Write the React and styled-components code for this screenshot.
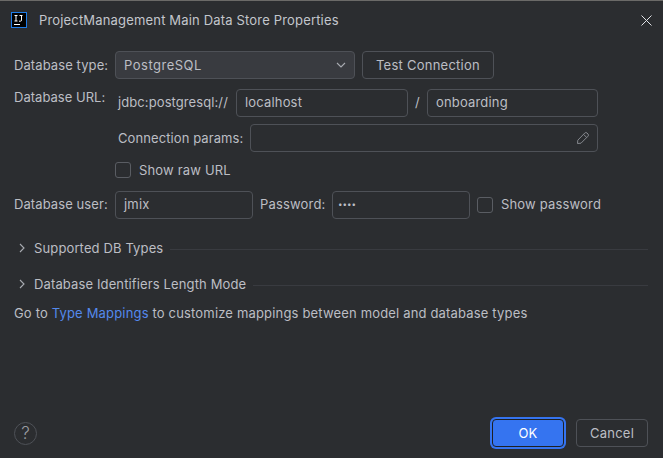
import React from "react";
import styled, { createGlobalStyle, css } from "styled-components";

const Global = createGlobalStyle`
  html, body { margin: 0; padding: 0; background: #2b2d30; }
  * { box-sizing: border-box; }
`;

const Dialog = styled.div`
  width: 663px;
  height: 458px;
  background: #2b2d30;
  border-top: 1px solid #6b6a68;
  color: #bcbec4;
  font-family: Inter, "Noto Sans", sans-serif;
  font-size: 13px;
  letter-spacing: 0.17px;
  display: flex;
  flex-direction: column;
  overflow: hidden;
`;

const TitleBar = styled.div`
  height: 38px;
  display: flex;
  align-items: center;
  padding: 0 11px 0 11px;
  gap: 12px;
`;

const Title = styled.div`
  flex: 1;
  color: #c3c6cc;
`;

const Form = styled.div`
  padding: 12px 65px 0 14px;
  display: flex;
  flex-direction: column;
`;

const Row = styled.div`
  display: flex;
  align-items: center;
  margin-top: ${(p) => p.$top ?? 0}px;
  margin-left: ${(p) => p.$left ?? 0}px;
  ${(p) =>
    p.$lift &&
    css`
      & > span,
      & > div {
        padding-bottom: 2px;
      }
    `}
`;

const UrlGrid = styled.div`
  display: flex;
  align-items: flex-start;
  margin-top: 10px;
`;

const UrlLabel = styled.div`
  width: 104px;
  line-height: 16px;
  letter-spacing: 0.02px;
`;

const UrlBody = styled.div`
  flex: 1;
  min-width: 0;
  display: flex;
  flex-direction: column;
`;

const Label = styled.span`
  white-space: nowrap;
  line-height: 16px;
  flex: none;
  width: ${(p) => (p.$w ? `${p.$w}px` : "auto")};
  letter-spacing: ${(p) => (p.$tight ? "0.09px" : "inherit")};
`;

const Combo = styled.div`
  width: 240px;
  height: 28px;
  background: #393b40;
  border: 1px solid #4e5157;
  border-radius: 4px;
  display: flex;
  align-items: center;
  justify-content: space-between;
  padding: 0 8px;
  margin-right: 7px;
  letter-spacing: 0.5px;
`;

const Button = styled.div`
  width: ${(p) => p.$w}px;
  height: 28px;
  border: 1px solid #4e5157;
  border-radius: 4px;
  display: flex;
  align-items: center;
  justify-content: center;
  letter-spacing: 0.25px;
`;

const Field = styled.div`
  width: ${(p) => (p.$w ? `${p.$w}px` : "auto")};
  flex: ${(p) => (p.$w ? "none" : 1)};
  height: 28px;
  margin-right: ${(p) => p.$after ?? 0}px;
  border: 1px solid #4e5157;
  border-radius: 4px;
  display: flex;
  align-items: center;
  justify-content: space-between;
  padding: 0 7px 0 8px;
`;

const Dots = styled.span`
  font-size: 8px;
  letter-spacing: 0;
  line-height: 1;
  margin-left: -3px;
`;

const Slash = styled.span`
  width: 19px;
  flex: none;
  text-align: center;
`;

const Check = styled.span`
  width: 16px;
  height: 16px;
  border: 1px solid #5a5d63;
  border-radius: 3px;
  flex: none;
  margin-right: 8px;
`;

const Section = styled.div`
  display: flex;
  align-items: center;
  height: 16px;
  margin-top: ${(p) => p.$top}px;
  padding-left: 3px;
  gap: 7px;
  letter-spacing: 0.13px;
`;

const Rule = styled.span`
  flex: 1;
  height: 1px;
  background: #393b40;
  margin-top: 2px;
`;

const Sections = styled.div`
  margin-right: -50px;
  margin-top: 21px;
`;

const Hint = styled.div`
  margin-top: 13px;
  line-height: 16px;
`;

const LinkText = styled.span`
  color: #5489ec;
`;

const Footer = styled.div`
  margin-top: auto;
  height: 28px;
  margin-bottom: 11px;
  padding: 0 15px 0 14px;
  display: flex;
  align-items: center;
  justify-content: space-between;
`;

const Help = styled.div`
  width: 23px;
  height: 23px;
  border: 1px solid #4e5157;
  border-radius: 50%;
  color: #9a9da3;
  font-size: 17px;
  font-weight: 300;
  display: flex;
  align-items: center;
  justify-content: center;
`;

const Actions = styled.div`
  display: flex;
  align-items: center;
  gap: 12px;
`;

const Primary = styled.div`
  width: 72px;
  height: 28px;
  background: #3574f0;
  border: 1px solid #1e2024;
  box-shadow: 0 0 0 2px #3574f0;
  border-radius: 4px;
  color: #ffffff;
  display: flex;
  align-items: center;
  justify-content: center;
`;

const Chevron = ({ dir = "right" }) => (
  <svg width="10" height="10" viewBox="0 0 10 10" fill="none">
    {dir === "right" ? (
      <path d="M3 1 L7 5 L3 9" stroke="#a8abb1" strokeWidth="1.1" />
    ) : (
      <path d="M1 3 L5 7 L9 3" stroke="#a8abb1" strokeWidth="1.1" />
    )}
  </svg>
);

const AppIcon = () => (
  <svg width="16" height="16" viewBox="0 0 16 16">
    <rect x="0.5" y="0.5" width="15" height="15" fill="#000" stroke="#1e7ce8" />
    <path d="M3.5 3.5H6.5M5 3.5V9M3.5 9H6.5M8 9.2H9.5Q10.5 9.2 10.5 8V3.5M8.5 3.5H11.5" stroke="#fff" fill="none" strokeWidth="1" />
    <rect x="3" y="12" width="6" height="1" fill="#fff" />
  </svg>
);

const CloseIcon = () => (
  <svg width="11" height="11" viewBox="0 0 11 11">
    <path d="M0.5 0.5 L10.5 10.5 M10.5 0.5 L0.5 10.5" stroke="#dfe1e5" strokeWidth="1" />
  </svg>
);

const PencilIcon = () => (
  <svg width="14" height="14" viewBox="0 0 14 14" fill="none" stroke="#85888e" strokeWidth="1">
    <path d="M1.5 12.5 L1.8 9.2 L8.8 2 Q9.8 1 11 2 L12 3 Q13 4.2 12 5.2 L5 12.2 Z" />
    <path d="M7.6 3.4 L10.7 6.5" />
  </svg>
);

export default function App() {
  return (
    <Dialog>
      <Global />
      <TitleBar>
        <AppIcon />
        <Title>ProjectManagement Main Data Store Properties</Title>
        <CloseIcon />
      </TitleBar>
      <Form>
        <Row>
          <Label $w={101} $tight>Database type:</Label>
          <Combo>
            PostgreSQL
            <Chevron dir="down" />
          </Combo>
          <Button $w={132}>Test Connection</Button>
        </Row>
        <UrlGrid>
          <UrlLabel>Database URL:</UrlLabel>
          <UrlBody>
            <Row $lift>
              <Label $w={118} $tight>jdbc:postgresql://</Label>
              <Field $w={172}>localhost</Field>
              <Slash>/</Slash>
              <Field $w={171}>onboarding</Field>
            </Row>
            <Row $top={7}>
              <Label $w={132} $tight>Connection params:</Label>
              <Field>
                <span />
                <PencilIcon />
              </Field>
            </Row>
            <Row $top={10} $left={-3}>
              <Check />
              <Label>Show raw URL</Label>
            </Row>
          </UrlBody>
        </UrlGrid>
        <Row $top={13} $lift>
          <Label $w={101} $tight>Database user:</Label>
          <Field $w={138} $after={7}>jmix</Field>
          <Label $w={72}>Password:</Label>
          <Field $w={138} $after={7}>
            <Dots>••••</Dots>
          </Field>
          <Check />
          <Label>Show password</Label>
        </Row>
        <Sections>
          <Section $top={0}>
            <Chevron />
            <Label>Supported DB Types</Label>
            <Rule />
          </Section>
          <Section $top={20}>
            <Chevron />
            <Label>Database Identifiers Length Mode</Label>
            <Rule />
          </Section>
        </Sections>
        <Hint>
          Go to <LinkText>Type Mappings</LinkText> to customize mappings between model and database types
        </Hint>
      </Form>
      <Footer>
        <Help>?</Help>
        <Actions>
          <Primary>OK</Primary>
          <Button $w={72}>Cancel</Button>
        </Actions>
      </Footer>
    </Dialog>
  );
}
